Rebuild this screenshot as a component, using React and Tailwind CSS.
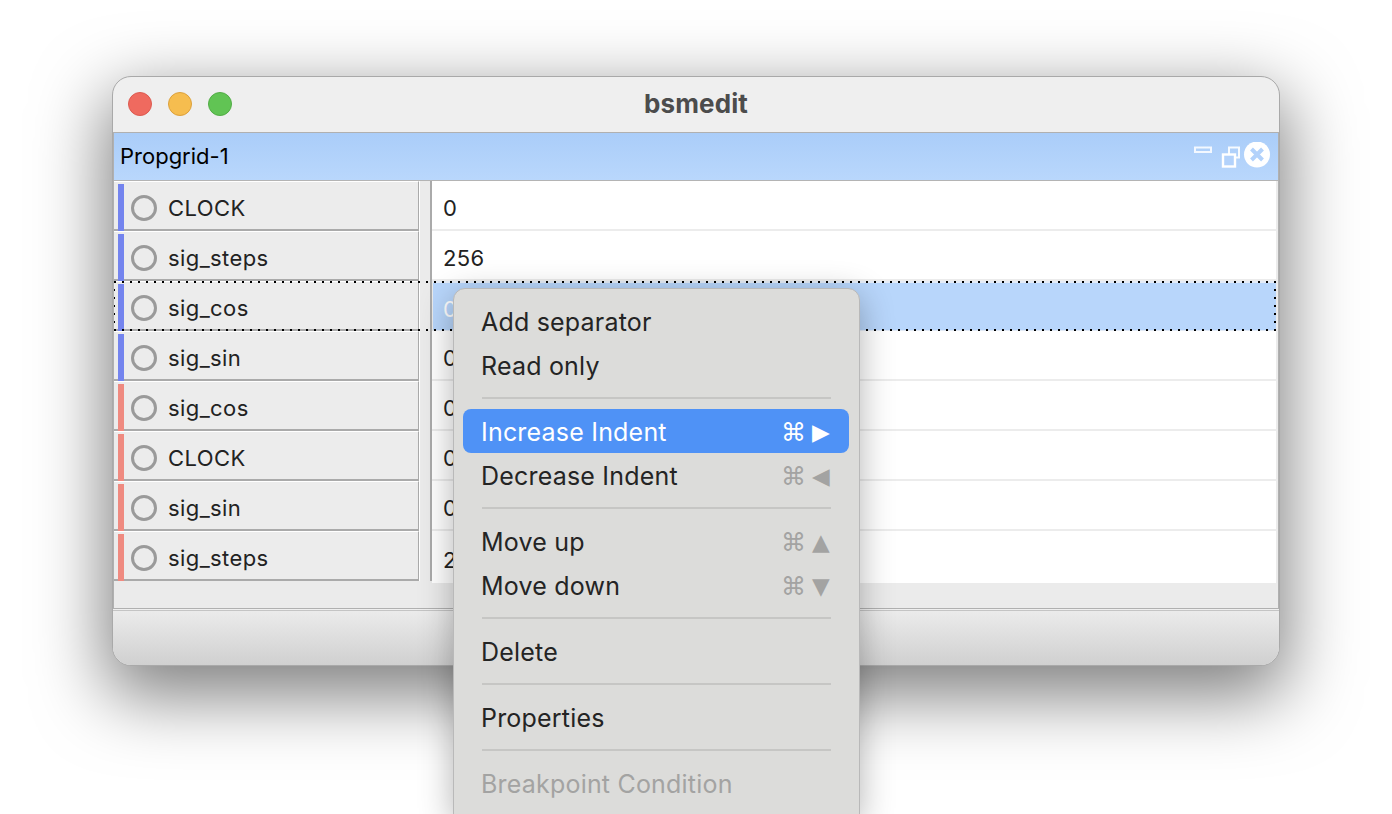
import React from 'react';

const rows = [
  { name: 'CLOCK', value: '0', color: 'bg-[#7484ee]' },
  { name: 'sig_steps', value: '256', color: 'bg-[#7484ee]' },
  { name: 'sig_cos', value: '0', color: 'bg-[#7484ee]', selected: true },
  { name: 'sig_sin', value: '0', color: 'bg-[#7484ee]' },
  { name: 'sig_cos', value: '0', color: 'bg-[#ef8a80]' },
  { name: 'CLOCK', value: '0', color: 'bg-[#ef8a80]' },
  { name: 'sig_sin', value: '0', color: 'bg-[#ef8a80]' },
  { name: 'sig_steps', value: '256', color: 'bg-[#ef8a80]', last: true },
];

const menu = [
  { label: 'Add separator' },
  { label: 'Read only' },
  { sep: true },
  { label: 'Increase Indent', arrow: '▶', active: true },
  { label: 'Decrease Indent', arrow: '◀' },
  { sep: true },
  { label: 'Move up', arrow: '▲' },
  { label: 'Move down', arrow: '▼' },
  { sep: true },
  { label: 'Delete' },
  { sep: true },
  { label: 'Properties' },
  { sep: true },
  { label: 'Breakpoint Condition', disabled: true },
];

const Row = ({ row }) => (
  <div className="relative flex h-[50px]">
    <div className="relative flex w-[305px] items-center border-t border-r border-b-2 border-t-white border-r-[#aaaaaa] border-b-[#aaaaaa] bg-[#ececec] pt-[5px]">
      <div className={`absolute left-[4px] top-[2px] bottom-[-2px] w-[6px] ${row.color}`}></div>
      <div className="ml-[17px] h-[26px] w-[26px] rounded-full border-[3px] border-[#9a9a9a]"></div>
      <span className="ml-[11px] text-[22px] tracking-[0.4px] text-[#222222]">{row.name}</span>
    </div>
    <div className="w-[11px] border-l border-white bg-[#ebebeb]"></div>
    <div className="w-[2px] bg-[#aaaaaa]"></div>
    <div className={`flex flex-1 items-center pt-[6px] text-[22px] tracking-[0.4px] ${row.selected ? 'ml-[1px] border-t-2 border-b border-[#e4ecf7] bg-[#b8d6fb] pl-[10px] text-white' : row.last ? 'mb-[-2px] bg-white pl-[11px] text-[#222222]' : 'border-b-2 border-[#ececec] bg-white pl-[11px] text-[#222222]'}`}>
      {row.value}
    </div>
    {row.selected && (
      <>
        <div className="absolute left-0 right-0 top-0 h-[2px] bg-[repeating-linear-gradient(90deg,#000_0_2px,transparent_2px_8px)]"></div>
        <div className="absolute left-0 right-0 bottom-0 h-[2px] bg-[repeating-linear-gradient(90deg,#000_0_2px,transparent_2px_8px)]"></div>
        <div className="absolute left-0 top-0 bottom-0 w-[1px] bg-[repeating-linear-gradient(0deg,#000_0_2px,transparent_2px_8px)]"></div>
        <div className="absolute right-0 top-0 bottom-0 w-[2px] bg-[repeating-linear-gradient(0deg,#000_0_2px,transparent_2px_8px)]"></div>
      </>
    )}
  </div>
);

const ContextMenu = () => (
  <div className="absolute left-[453px] top-[288px] w-[407px] rounded-t-[12px] border border-[#b9b9b9] bg-[#dcdcda] pl-[9px] pr-[10px] pb-[10px] pt-[10px] shadow-[0_8px_34px_rgba(0,0,0,0.3)]">
    {menu.map((item, i) =>
      item.sep ? (
        <div key={i} className="flex h-[22px] items-center pl-[19px] pr-[18px]">
          <div className="h-[2px] w-full bg-[#c6c6c4]"></div>
        </div>
      ) : (
        <div
          key={i}
          className={`flex h-[44px] items-center justify-between rounded-[8px] pl-[18px] pr-[19px] pt-[3px] text-[25px] tracking-[0.2px] ${
            item.active ? 'bg-[#4f92f6] text-white' : item.disabled ? 'text-[#a3a3a2]' : 'text-[#242424]'
          }`}
        >
          <span>{item.label}</span>
          {item.arrow && (
            <span className={`flex items-center gap-[6px] font-['DejaVu_Sans',sans-serif] ${item.active ? 'text-white' : 'text-[#a3a3a2]'}`}>
              <span className="text-[25px] leading-none">⌘</span>
              <span className="text-[23px] leading-none">{item.arrow}</span>
            </span>
          )}
        </div>
      )
    )}
  </div>
);

const App = () => {
  return (
    <div className="relative h-[814px] w-[1392px] overflow-hidden bg-white pl-[112px] pt-[76px] font-['Inter',sans-serif]">
      <div className="flex h-[590px] w-[1168px] flex-col overflow-hidden rounded-[19px] border border-[#a9a9a9] bg-[#efefef] shadow-[0_24px_70px_6px_rgba(0,0,0,0.5)]">
        <div className="relative flex h-[55px] items-center justify-center pb-[2px]">
          <div className="absolute left-[15px] top-[15px] flex gap-[16px]">
            <div className="h-[24px] w-[24px] rounded-full border border-[#dc5a50] bg-[#ef6a5f]"></div>
            <div className="h-[24px] w-[24px] rounded-full border border-[#dca03c] bg-[#f6bd4f]"></div>
            <div className="h-[24px] w-[24px] rounded-full border border-[#52ac46] bg-[#61c454]"></div>
          </div>
          <span className="text-[26px] font-bold tracking-[0.1px] text-[#4c4c4c]">bsmedit</span>
        </div>

        <div className="flex h-[477px] flex-col border border-[#b0b0b0] bg-[#ebebeb]">
          <div className="flex h-[48px] items-center justify-between border-b border-[#b4b4b4] bg-gradient-to-b from-[#aacdf9] to-[#b9d7fc] pl-[6px] pr-[5px]">
            <span className="text-[22px] text-black">Propgrid-1</span>
            <svg width="86" height="30" viewBox="0 0 86 30" fill="none">
              <rect x="8" y="5.5" width="16" height="4.5" stroke="#fff" strokeWidth="2" opacity="0.85" />
              <rect x="42" y="5.5" width="10" height="10" stroke="#fff" strokeWidth="2" opacity="0.9" />
              <rect x="36" y="12.5" width="12" height="12" fill="#b3d2fb" stroke="#fff" strokeWidth="2.4" />
              <circle cx="70" cy="12.5" r="13" fill="#fff" />
              <path d="M64.5 7 L75.5 18 M75.5 7 L64.5 18" stroke="#b3d2fb" strokeWidth="4" />
            </svg>
          </div>
          <div className="pr-[2px]">
            {rows.map((row, i) => (
              <Row key={i} row={row} />
            ))}
          </div>
        </div>

        <div className="mt-px flex-1 border-t border-[#c4c4c4] bg-gradient-to-b from-[#ebebeb] to-[#d0d0d0]"></div>
      </div>
      <ContextMenu />
    </div>
  );
};

export default App;
